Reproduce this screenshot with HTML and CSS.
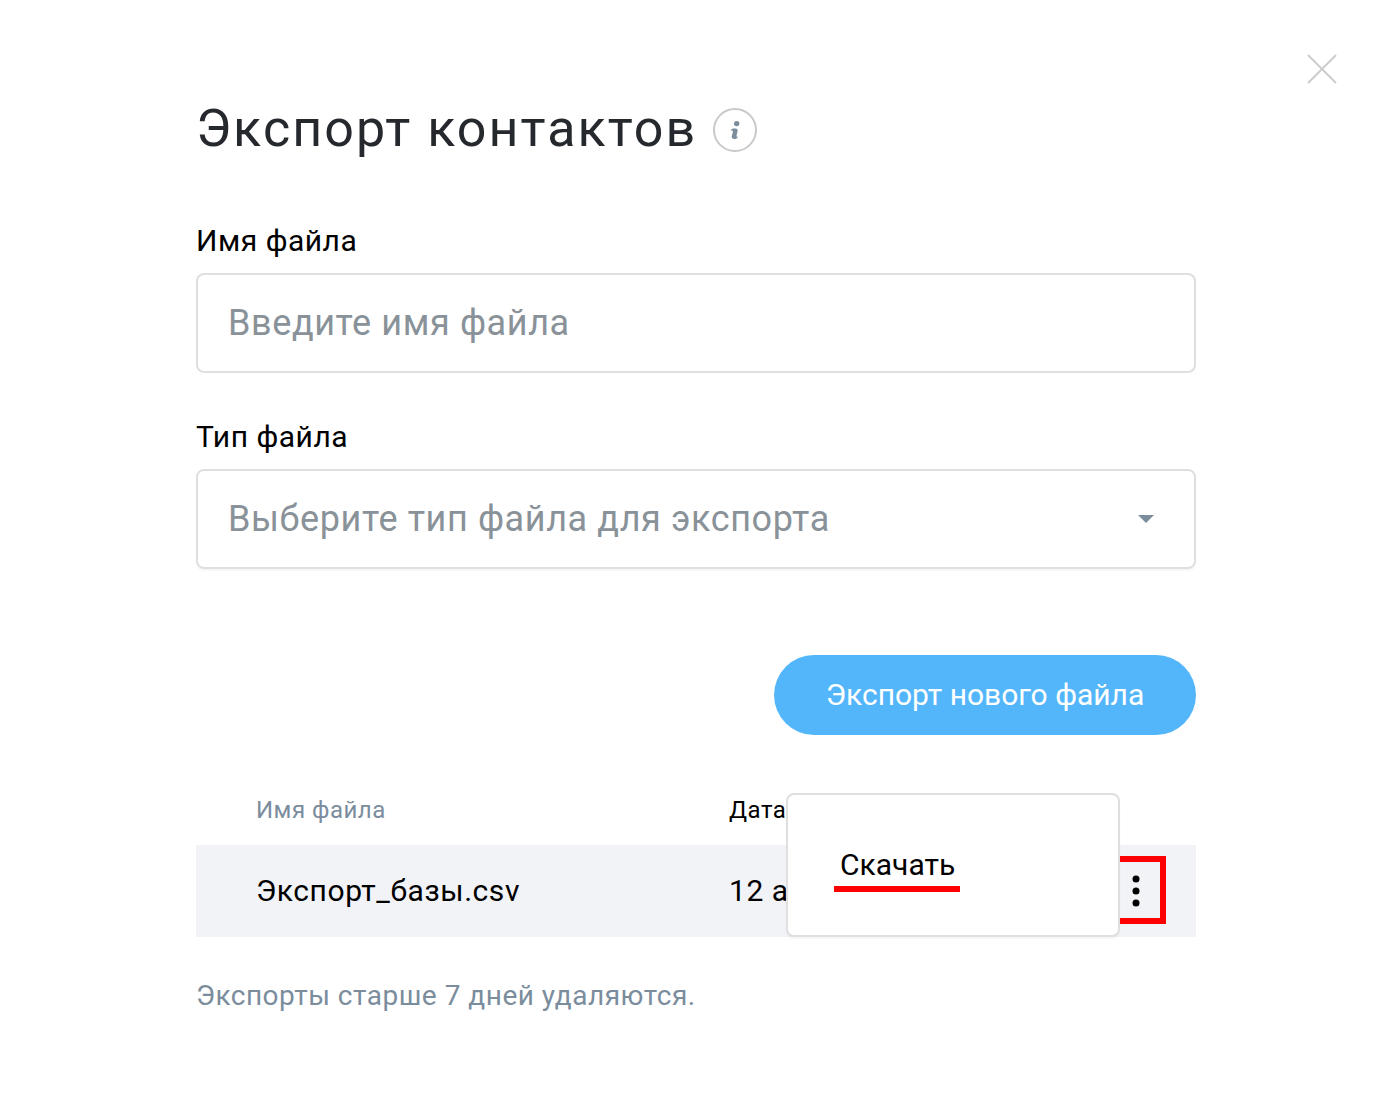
FILE: index.html
```html
<!DOCTYPE html>
<html lang="ru">
<head>
<meta charset="utf-8">
<title>Экспорт контактов</title>
<link rel="stylesheet" href="styles.css">
</head>
<body>
<main class="modal">
  <button class="close" aria-label="Закрыть"><svg width="30" height="30" viewBox="0 0 30 30"><path d="M1 1L29 29M29 1L1 29" stroke="#cbcbcb" stroke-width="1.8" fill="none"/></svg></button>
  <header class="heading">
    <h1 class="title">Экспорт контактов</h1>
    <span class="info"><svg width="44" height="44" viewBox="0 0 44 44"><circle cx="22" cy="22" r="21" fill="none" stroke="#c9c9c9" stroke-width="2"/><circle cx="23.7" cy="15.6" r="2.7" fill="#7b8d9d"/><path d="M17.8 22.4Q18.4 20.6 20.2 20.5H22.6Q25 20.6 24.6 23.2L23.4 28Q23.2 29 25 28.6Q24.6 30.8 22 31Q18.2 31.2 18.8 28L20 23.8Q20 22.2 17.8 22.4Z" fill="#7b8d9d"/></svg></span>
  </header>
  <label class="label">Имя файла</label>
  <div class="field"><span class="hint">Введите имя файла</span></div>
  <label class="label">Тип файла</label>
  <div class="field select"><span class="hint">Выберите тип файла для экспорта</span><svg class="caret" width="16" height="8" viewBox="0 0 16 8"><path d="M0 0H16L8 8Z" fill="#7b8d9d"/></svg></div>
  <div class="actions"><button class="primary"><span class="primary-text">Экспорт нового файла</span></button></div>
  <section class="files">
    <div class="row head"><span class="name">Имя файла</span><span class="date">Дата</span></div>
    <div class="row item"><span class="name">Экспорт_базы.csv</span><span class="date">12 а</span></div>
    <div class="more"><svg width="8" height="32" viewBox="0 0 8 32"><circle cx="4" cy="4" r="3.5"/><circle cx="4" cy="16" r="3.5"/><circle cx="4" cy="28" r="3.5"/></svg></div>
    <div class="menu"><span class="download">Скачать</span></div>
  </section>
  <p class="note">Экспорты старше 7 дней удаляются.</p>
</main>
</body>
</html>
```
FILE: styles.css
```css
* { box-sizing: border-box; }
body { margin: 0; background: #fff; color: #000; font-family: Roboto, sans-serif; }
svg { display: block; }
button { border: 0; padding: 0; background: none; font: inherit; }
.modal { position: relative; width: 1388px; height: 1104px; padding: 98px 192px 0 196px; overflow: hidden; }
.close { position: absolute; left: 1307px; top: 54px; }
.heading { display: flex; align-items: center; height: 64px; margin-bottom: 64px; gap: 16px; }
.title { margin: 0; padding-bottom: 2px; font-size: 52px; line-height: 60px; font-weight: 400; letter-spacing: 2.06px; color: #25282d; white-space: nowrap; }
.label { display: block; height: 47px; line-height: 30px; font-size: 30px; letter-spacing: .52px; }
.field { display: flex; align-items: center; justify-content: space-between; height: 100px; margin-bottom: 49px; padding: 0 40px 0 30px; border: 2px solid #dfdfdf; border-radius: 8px; color: #8a9299; font-size: 36px; letter-spacing: .6px; }
.select { box-shadow: 0 2px 2px #0000000a; }
.actions { display: flex; justify-content: flex-end; margin-top: 86px; }
.primary { width: 422px; height: 80px; padding-bottom: 2px; border-radius: 40px; background: #54b6fa; color: #fff; font-size: 30px; }
.files { position: relative; margin-top: 40px; }
.row { display: grid; grid-template-columns: 473px 1fr; padding-left: 60px; align-items: center; }
.head { height: 70px; font-size: 24px; letter-spacing: .5px; }
.head .name { color: #7b8d9d; }
.item { height: 92px; padding-bottom: 2px; background: #f2f3f7; font-size: 30px; letter-spacing: .56px; }
.more { position: absolute; left: 910px; top: 81px; width: 60px; height: 68px; border: 6px solid #f00; padding: 13px 20px; }
.menu { position: absolute; left: 590px; top: 18px; width: 334px; height: 144px; padding: 52px 46px; border: 2px solid #dfdfdf; border-radius: 8px; background: #fff; box-shadow: 0 2px 2px #0000000a; }
.download { display: block; width: 126px; height: 45px; padding-left: 6px; border-bottom: 6px solid #f00; font-size: 30px; line-height: 36px; white-space: nowrap; }
.note { margin: 42px 0 0; color: #7b8d9d; font-size: 28px; line-height: 34px; letter-spacing: .5px; }
```
